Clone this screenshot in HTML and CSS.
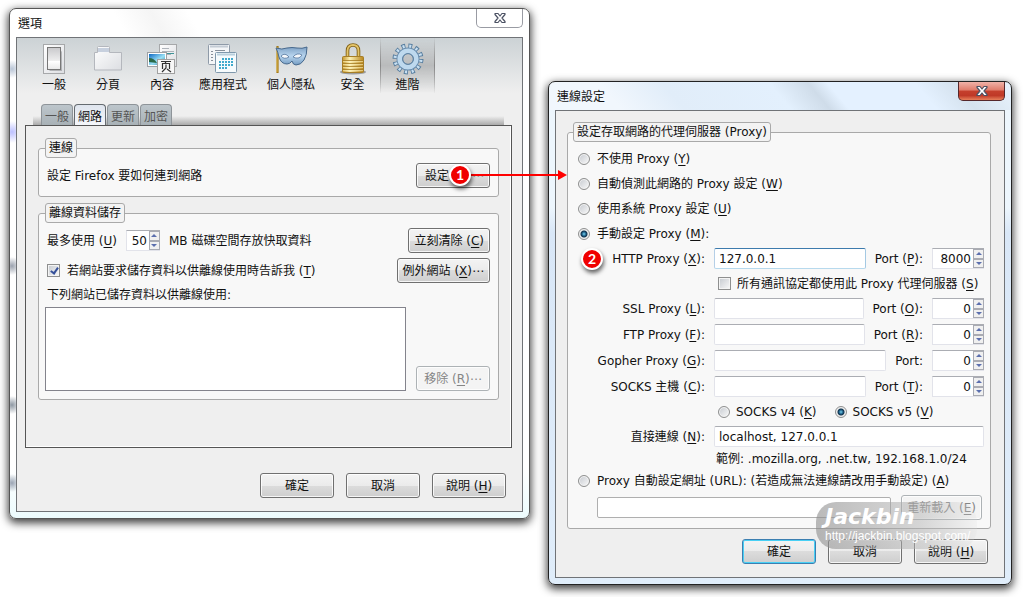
FILE: index.html
```html
<!DOCTYPE html>
<html lang="zh-Hant">
  <head>
    <meta charset="utf-8">
    <title>選項</title>
    <link rel="stylesheet" href="styles.css">
  </head>

  <body>
    <main class="desktop">
      <section class="window options">
        <header class="titlebar">
          <h1>選項</h1>
          <button class="close" aria-label="關閉">
            <svg width="14" height="12" viewBox="0 0 14 12">
              <path d="M2 1.500h3l2 2.500 2-2.500h3v1L9 6l3 3.500v1H9L7 8l-2 2.500H2v-1L5 6 2 2.500z" fill="#fff" stroke="#4b5163" stroke-width="1.200" stroke-linejoin="round"/>
            </svg>
          </button>
        </header>

        <div class="window-body">
          <nav class="toolbar">
            <button class="tool">
              <svg width="32" height="32" viewBox="0 0 32 32">
                <defs>
                  <linearGradient id="paper" x1="0" y1="0" x2="1" y2="1">
                    <stop offset="0" stop-color="#fff"/><stop offset="1" stop-color="#dcdee2"/>
                  </linearGradient>
                  <linearGradient id="switch" x1="0" y1="0" x2="0" y2="1">
                    <stop offset="0" stop-color="#c9c9cc"/><stop offset=".6" stop-color="#eee"/><stop offset=".62" stop-color="#fff"/><stop offset="1" stop-color="#e8e8e8"/>
                  </linearGradient>
                </defs>
                <rect x="5.500" y="1.500" width="21" height="29" fill="url(#paper)" stroke="#a6a8aa"/>
                <path d="M22 6l2 3v19H12l-2-2z" fill="#8f9194" opacity=".6"/>
                <rect x="9.500" y="4.500" width="13" height="22" fill="url(#switch)" stroke="#777"/>
              </svg>
              <span>一般</span>
            </button>
            <button class="tool">
              <svg width="32" height="32" viewBox="0 0 32 32">
                <path d="M2.500 9.500h3V4.500q0-1 1-1h10q1 0 1 1v5h12v17.500h-27z" fill="url(#paper)" stroke="#b4b7bd"/>
                <path d="M6 5h11v4H6z" fill="#c7d0de"/>
              </svg>
              <span>分頁</span>
            </button>
            <button class="tool">
              <svg width="32" height="32" viewBox="0 0 32 32">
                <defs>
                  <linearGradient id="sea" x1="0" y1="0" x2="1" y2="1">
                    <stop offset="0" stop-color="#0d69c5"/><stop offset=".55" stop-color="#9be0f5"/><stop offset="1" stop-color="#2378a0"/>
                  </linearGradient>
                </defs>
                <rect x="13.500" y="1.500" width="17" height="22" fill="url(#paper)" stroke="#a6a8aa"/>
                <path d="M16 5.500h7M16 8.500h12M16 11.500h9" stroke="#aeb3ba"/>
                <path d="M21 10.500h7" stroke="#3f9497"/>
                <rect x="1.500" y="9.500" width="19" height="14" fill="#fff" stroke="#9da0a4"/>
                <path d="M3 11h16v11H3z" fill="url(#sea)"/>
                <path d="M3 15q5 0 8 5l-8-1z" fill="#2b6a48"/>
                <rect x="11.500" y="16.500" width="17" height="14" fill="#f7f7f7" stroke="#a0a0a0"/>
                <path d="M15 18.500h10M20 18.500l-1 2M16.500 26v-5.500h7V26M20 21.500V25l-4 4M21 26l4 3" fill="none" stroke="#333" stroke-width="1.200"/>
              </svg>
              <span>內容</span>
            </button>
            <button class="tool">
              <svg width="32" height="32" viewBox="0 0 32 32">
                <rect x="1.500" y="1.500" width="21" height="20" rx="1" fill="#f4f6f8" stroke="#8e9aa8"/>
                <path d="M3 3.500h18" stroke="#c3cbd4" stroke-width="2"/>
                <path d="M4 8.500h2M4 11.500h2M4 14.500h2M4 17.500h2M8 7.500h10" stroke="#87909b"/>
                <rect x="8.500" y="9.500" width="21" height="20" rx="1" fill="#f6fbfd" stroke="#7f98ac"/>
                <path d="M10 11.500h18" stroke="#b9cfdc" stroke-width="2"/>
                <path d="M15 16h12M12 19h15M12 22h15M12 25h9" stroke="#40aacd" stroke-width="2" stroke-dasharray="2 1"/>
              </svg>
              <span>應用程式</span>
            </button>
            <button class="tool">
              <svg width="34" height="32" viewBox="0 0 34 32">
                <defs>
                  <linearGradient id="blue" x1="0" y1="0" x2="0" y2="1">
                    <stop offset="0" stop-color="#7ea1c5"/><stop offset=".5" stop-color="#b8d5ee"/><stop offset="1" stop-color="#739bc2"/>
                  </linearGradient>
                </defs>
                <path d="M3.500 3v27" stroke="#a57b16" stroke-width="2.200"/>
                <path d="M3 4v25" stroke="#ecc861" stroke-width=".8"/>
                <path d="M2 5q6 2 11 0 5-1 10 0 5 1 10-1 0 8-3 13-3 5-8 5-3 0-4-4-2 3-5 3-6 0-8-7-1-5-3-9z" fill="url(#blue)" stroke="#47698d"/>
                <path d="M7 13q4-4 8 1-5 3-8-1zM19 14q4-5 9-2-3 5-9 2z" fill="#f4f7fa" stroke="#5577a0" stroke-width=".8"/>
              </svg>
              <span>個人隱私</span>
            </button>
            <button class="tool">
              <svg width="32" height="32" viewBox="0 0 32 32">
                <defs>
                  <linearGradient id="gold" x1="0" y1="0" x2="1" y2="0">
                    <stop offset="0" stop-color="#c6982f"/><stop offset=".35" stop-color="#fdf1b4"/><stop offset="1" stop-color="#b9861c"/>
                  </linearGradient>
                </defs>
                <path d="M10.500 15V8q0-6 5.500-6t5.500 6v7" fill="none" stroke="#806117" stroke-width="3.600"/>
                <path d="M10.500 15V8q0-6 5.500-6t5.500 6v7" fill="none" stroke="#e3c368" stroke-width="1.800"/>
                <ellipse cx="16" cy="29" rx="13" ry="2.500" fill="#555" opacity=".5"/>
                <rect x="5.500" y="13.500" width="21" height="16" rx="1" fill="url(#gold)" stroke="#a67e27"/>
                <path d="M6 17.500h20M6 20.500h20M6 23.500h20M6 26.500h20" stroke="#a67b22" stroke-width=".8"/>
                <path d="M6 18.500h20M6 21.500h20M6 24.500h20M6 27.500h20" stroke="#fff3bd" stroke-width=".8" opacity=".7"/>
              </svg>
              <span>安全</span>
            </button>
            <button class="tool selected">
              <svg width="32" height="32" viewBox="0 0 32 32">
                <circle cx="16" cy="16" r="12.500" fill="none" stroke="#587e9f" stroke-width="6" stroke-dasharray="3.600 2.945"/>
                <circle cx="16" cy="16" r="12" fill="none" stroke="#c9e0f2" stroke-width="5" stroke-dasharray="1.900 4.383" stroke-dashoffset="-.8"/>
                <circle cx="16" cy="16" r="8.200" fill="none" stroke="#688cad" stroke-width="6.600"/>
                <circle cx="16" cy="16" r="8.200" fill="none" stroke="#bed9ee" stroke-width="4.800"/>
                <circle cx="16" cy="16" r="5.400" fill="none" stroke="#5f83a2"/>
              </svg>
              <span>進階</span>
            </button>
          </nav>

          <div class="tabs">
            <button class="tab">一般</button>
            <button class="tab active">網路</button>
            <button class="tab">更新</button>
            <button class="tab">加密</button>
          </div>

          <div class="panel">
            <fieldset class="group">
              <legend>連線</legend>
              <div class="row">
                <span>設定 Firefox 要如何連到網路</span>
                <button class="btn marked"><span>設定</span><span>⋯</span></button>
              </div>
            </fieldset>

            <fieldset class="group">
              <legend>離線資料儲存</legend>
              <div class="row">
                <div class="cache">
                  <label for="cacheSize">最多使用 (<u>U</u>)</label>
                  <span class="spin small">
                    <input id="cacheSize" type="text" value="50">
                    <span class="arrows"><button class="up" aria-label="增加"></button><button class="down" aria-label="減少"></button></span>
                  </span>
                  <span>MB 磁碟空間存放快取資料</span>
                </div>
                <button class="btn">立刻清除 (<u>C</u>)</button>
              </div>
              <div class="row">
                <label class="check"><input type="checkbox" checked> <span>若網站要求儲存資料以供離線使用時告訴我 (<u>T</u>)</span></label>
                <button class="btn">例外網站 (<u>X</u>)⋯</button>
              </div>
              <label class="list-label" for="siteList">下列網站已儲存資料以供離線使用:</label>
              <div class="list-row">
                <select id="siteList" class="list" size="5"></select>
                <button class="btn" disabled>移除 (<u>R</u>)⋯</button>
              </div>
            </fieldset>
          </div>

          <footer class="actions">
            <button class="btn">確定</button>
            <button class="btn">取消</button>
            <button class="btn">說明 (<u>H</u>)</button>
          </footer>
        </div>
      </section>

      <section class="window connection">
        <header class="titlebar">
          <h1>連線設定</h1>
          <button class="close" aria-label="關閉">
            <svg width="14" height="12" viewBox="0 0 14 12">
              <path d="M2 1.500h3l2 2.500 2-2.500h3v1L9 6l3 3.500v1H9L7 8l-2 2.500H2v-1L5 6 2 2.500z" fill="#fff" stroke="#4b5163" stroke-width="1.200" stroke-linejoin="round"/>
            </svg>
          </button>
        </header>

        <div class="window-body">
          <fieldset class="group proxy">
            <legend>設定存取網路的代理伺服器 (Proxy)</legend>
            <div class="modes">
              <label class="check"><input type="radio" name="mode"> <span>不使用 Proxy (<u>Y</u>)</span></label>
              <label class="check"><input type="radio" name="mode"> <span>自動偵測此網路的 Proxy 設定 (<u>W</u>)</span></label>
              <label class="check"><input type="radio" name="mode"> <span>使用系統 Proxy 設定 (<u>U</u>)</span></label>
              <label class="check"><input type="radio" name="mode" checked> <span>手動設定 Proxy (<u>M</u>):</span></label>
            </div>

            <div class="field">
              <label class="name" for="http">HTTP Proxy (<u>X</u>):</label>
              <input id="http" class="text focused" type="text" value="127.0.0.1">
              <label for="httpPort">Port (<u>P</u>):</label>
              <span class="spin">
                <input id="httpPort" type="text" value="8000">
                <span class="arrows"><button class="up" aria-label="增加"></button><button class="down" aria-label="減少"></button></span>
              </span>
            </div>
            <div class="sub">
              <label class="check"><input type="checkbox"> <span>所有通訊協定都使用此 Proxy 代理伺服器 (<u>S</u>)</span></label>
            </div>
            <div class="field">
              <label class="name" for="ssl">SSL Proxy (<u>L</u>):</label>
              <input id="ssl" class="text" type="text">
              <label for="sslPort">Port (<u>O</u>):</label>
              <span class="spin">
                <input id="sslPort" type="text" value="0">
                <span class="arrows"><button class="up" aria-label="增加"></button><button class="down" aria-label="減少"></button></span>
              </span>
            </div>
            <div class="field">
              <label class="name" for="ftp">FTP Proxy (<u>F</u>):</label>
              <input id="ftp" class="text" type="text">
              <label for="ftpPort">Port (<u>R</u>):</label>
              <span class="spin">
                <input id="ftpPort" type="text" value="0">
                <span class="arrows"><button class="up" aria-label="增加"></button><button class="down" aria-label="減少"></button></span>
              </span>
            </div>
            <div class="field">
              <label class="name" for="gopher">Gopher Proxy (<u>G</u>):</label>
              <input id="gopher" class="text" type="text">
              <label for="gopherPort">Port:</label>
              <span class="spin">
                <input id="gopherPort" type="text" value="0">
                <span class="arrows"><button class="up" aria-label="增加"></button><button class="down" aria-label="減少"></button></span>
              </span>
            </div>
            <div class="field">
              <label class="name" for="socks">SOCKS 主機 (<u>C</u>):</label>
              <input id="socks" class="text" type="text">
              <label for="socksPort">Port (<u>T</u>):</label>
              <span class="spin">
                <input id="socksPort" type="text" value="0">
                <span class="arrows"><button class="up" aria-label="增加"></button><button class="down" aria-label="減少"></button></span>
              </span>
            </div>
            <div class="sub">
              <label class="check"><input type="radio" name="socksVersion"> <span>SOCKS v4 (<u>K</u>)</span></label>
              <label class="check"><input type="radio" name="socksVersion" checked> <span>SOCKS v5 (<u>V</u>)</span></label>
            </div>
            <div class="field">
              <label class="name" for="direct">直接連線 (<u>N</u>):</label>
              <input id="direct" class="text" type="text" value="localhost, 127.0.0.1">
            </div>
            <p class="example">範例: .mozilla.org, .net.tw, 192.168.1.0/24</p>
            <label class="check auto"><input type="radio" name="mode"> <span>Proxy 自動設定網址 (URL): (若造成無法連線請改用手動設定) (<u>A</u>)</span></label>
            <div class="reload">
              <input class="text" type="text" aria-label="Proxy 自動設定網址" disabled>
              <button class="btn" disabled>重新載入 (<u>E</u>)</button>
            </div>
          </fieldset>

          <footer class="actions">
            <button class="btn default">確定</button>
            <button class="btn">取消</button>
            <button class="btn">說明 (<u>H</u>)</button>
          </footer>
        </div>
      </section>

      <!-- callouts -->
      <svg class="arrow" width="100" height="10" viewBox="0 0 100 10">
        <path d="M0 5h92" stroke="#f00" stroke-width="2"/>
        <path d="M90 0l9 5-9 5z" fill="#f00"/>
      </svg>
      <span class="badge one">1</span>
      <span class="badge two">2</span>

      <div class="watermark">
        <strong>Jackbin</strong>
        <span>http://jackbin.blogspot.com/</span>
      </div>
    </main>
  </body>
</html>
```

FILE: styles.css
```css
:root {
  --face: #efefef;
  --line: #a9a9a9;
  --ui: "DejaVu Sans", "Noto Sans CJK TC", sans-serif;
}

* {
  box-sizing: border-box;
}

body {
  margin: 0;
  background: #fff;
  color: #111;
  font: 12px/14px var(--ui);
}

button,
input,
select {
  margin: 0;
  font: inherit;
  color: inherit;
}

u {
  text-underline-offset: 2px;
}

.desktop {
  position: relative;
  min-height: 100vh;
  overflow: hidden;
}

/* windows */
.window {
  position: absolute;
  padding: 0 6px 6px;
  border: 1px solid #555;
  border-radius: 7px;
  background: #fff;
  box-shadow: 0 3px 9px 1px rgba(0, 0, 0, 0.75);
}
.options {
  left: 9px;
  top: 8px;
  width: 521px;
  background:
    radial-gradient(circle at 2px 60px, #b9c5d6, transparent 9px),
    radial-gradient(circle at 2px 123px, #bcc0ff, transparent 11px),
    radial-gradient(circle at 2px 257px, #9ba2ae, transparent 9px),
    radial-gradient(circle at 2px 396px, #8e98a3, transparent 9px),
    radial-gradient(circle at 2px 474px, #9ba5b4, transparent 9px),
    linear-gradient(60deg, #fff 22%, #f5f5f5 29%, #fff 36%) 0 0 / 100% 28px no-repeat,
    linear-gradient(#fff 90%, #ecfbfd);
}
.connection {
  left: 548px;
  top: 81px;
  width: 464px;
  border-color: #222;
  background:
    linear-gradient(50deg, #f1f7fd 15%, #e1edf9 28%, #e3f0fd 50%, #cfdce9 58%, #e4f1ff 62%, #e4f1ff 80%, #d5e2ee 88%, #e9f3fd) 0 0 / 100% 28px no-repeat,
    linear-gradient(#edf6fd 25%, #d9e7f7 30%, #e0edfa);
}

.titlebar {
  display: flex;
  justify-content: space-between;
  height: 28px;
}
.titlebar h1 {
  margin: 7px 2px;
  font: 12px/16px var(--ui);
}
.close {
  display: flex;
  justify-content: center;
  align-items: center;
  width: 47px;
  height: 19px;
  padding: 0;
  border: 1px solid #999ba3;
  border-top: 0;
  border-radius: 0 0 5px 5px;
  background: #fff;
}
.connection .close {
  border-color: #55272a;
  background: linear-gradient(#efb2a8, #df7c6b 45%, #c5402d 50%, #bf3927 75%, #e7805b);
}

.window-body {
  border: 1px solid #707377;
  background: var(--face);
}

/* toolbar */
.toolbar {
  display: flex;
  height: 55px;
  padding-left: 10px;
  background: linear-gradient(#ccd2d5, var(--face));
}
.tool {
  display: flex;
  flex-direction: column;
  align-items: center;
  gap: 3px;
  min-width: 54px;
  padding: 5px 10px 0;
  border: 0;
  background: none;
}
.tool:nth-child(n + 5) {
  min-width: 55px;
}
.tool.selected {
  border-right: 1px solid;
  border-left: 1px solid;
  border-image: linear-gradient(transparent, #888 50%, transparent) 1;
  background: linear-gradient(rgba(150, 150, 150, 0), rgba(150, 150, 150, 0.5) 50%, rgba(150, 150, 150, 0));
}

/* tabs */
.tabs {
  display: flex;
  gap: 1px;
  margin: 11px 10px 0 8px;
  padding-left: 16px;
  background: linear-gradient(transparent 12px, #aaa) 8px 0 / calc(100% - 16px) 100% no-repeat;
}
.tab {
  width: 32px;
  height: 21px;
  padding: 4px 0 0;
  border: 1px solid #8e9499;
  border-bottom: 0;
  border-radius: 4px 4px 0 0;
  background: linear-gradient(#bdc6cc, #a8b1b6);
  color: #555;
}
.tab.active {
  border-color: #656b70;
  background: linear-gradient(#dfe5ee, #f5f7fb);
  color: #111;
}

.panel {
  height: 323px;
  margin: 0 10px 0 8px;
  padding: 12px;
  border: 1px solid #555;
  box-shadow: inset -1px -1px #fff;
}

/* groups */
.group {
  min-width: 0;
  margin: 0 0 6px;
  padding: 5px 8px 8px 6px;
  border: 1px solid var(--line);
  border-radius: 3px;
  background: #f8f8f8;
}
.group legend {
  height: 20px;
  padding: 2px 3px;
  border: 1px solid var(--line);
  border-radius: 3px;
  background: #f3f3f3;
}

.row,
.list-row {
  display: flex;
  justify-content: space-between;
  align-items: center;
}
.row {
  padding-left: 2px;
}
.row + .row {
  margin-top: 5px;
}
.cache {
  display: flex;
  align-items: center;
  gap: 9px;
}
.list-label {
  display: block;
  margin: 5px 2px;
}
.list-row {
  align-items: flex-end;
  gap: 10px;
}
.list {
  flex: 1;
  height: 84px;
  border: 1px solid #83838c;
  border-radius: 0;
  background: #fff;
}

/* controls */
.btn {
  min-width: 74px;
  height: 25px;
  padding: 0 5px;
  border: 1px solid #707070;
  border-radius: 3px;
  background: linear-gradient(#f3f3f3, #ebebeb 50%, #dcdcdc 50%, #cecece);
  box-shadow: inset 0 0 0 1px rgba(255, 255, 255, 0.8);
  white-space: nowrap;
}
.btn:disabled {
  border-color: #adb2b5;
  background: #f4f4f4;
  color: #858585;
}
.btn.default {
  border-color: #3c7fb1;
  box-shadow: inset 0 0 0 1px #48d0f5;
}
.btn.marked {
  display: flex;
  justify-content: space-between;
  align-items: center;
  padding: 0 5px 0 8px;
}
.marked span + span {
  color: #999;
}

.check {
  display: flex;
  align-items: center;
  gap: 7px;
}
.check input {
  appearance: none;
  flex: none;
  width: 12px;
  height: 12px;
  border: 1px solid #8e8f8f;
  background: linear-gradient(135deg, #c5c9cf, #fafafa);
  box-shadow: inset 0 0 0 1px #f4f4f4;
}
.check input[type="checkbox"] {
  position: relative;
  width: 13px;
  height: 13px;
}
.check input[type="checkbox"]:checked::after {
  content: "";
  position: absolute;
  left: 4px;
  top: 1px;
  width: 3px;
  height: 6px;
  border: solid #35509a;
  border-width: 0 2px 2px 0;
  transform: rotate(35deg);
}
.check input[type="radio"] {
  border-radius: 50%;
}
.check input[type="radio"]:checked {
  background: radial-gradient(circle at 5px 5px, #79d5f2, #1c5c85 2px, #12334c 3px, #eee 4px);
  box-shadow: none;
}

.text,
.spin {
  height: 21px;
  border: 1px solid #e2e3ea;
  border-top-color: #abadb3;
  background: #fff;
}
.text {
  flex: 1;
  min-width: 0;
  padding: 0 4px;
  border-radius: 2px;
}
.text.focused {
  border-color: #3d7bad #a4c9e3 #b7d9ed #b5cfe7;
}
.text:disabled {
  border-color: #afafaf;
}

.spin {
  display: flex;
  width: 52px;
  border-right: 0;
}
.spin.small {
  width: 34px;
}
.spin input {
  flex: 1;
  width: 0;
  padding: 0 2px 0 0;
  border: 0;
  background: none;
  text-align: right;
}
.arrows {
  display: flex;
  flex-direction: column;
  width: 11px;
}
.arrows button {
  display: flex;
  flex: 1;
  justify-content: center;
  align-items: center;
  padding: 0;
  border: 1px solid #a9abb3;
  background: #f0f0f0;
}
.arrows button::after {
  content: "";
  border: solid transparent;
  border-width: 0 3px;
}
.arrows .up::after {
  border-bottom: 3px solid #5b6fae;
}
.arrows .down::after {
  border-top: 3px solid #5b6fae;
}

.actions {
  display: flex;
  justify-content: flex-end;
  gap: 12px;
  padding: 25px 16px 13px;
}

/* connection settings */
.proxy {
  display: flex;
  flex-direction: column;
  gap: 5px;
  margin: 11px 13px 0 11px;
  padding: 4px 6px 8px 10px;
}
.proxy legend {
  margin-left: -5px;
}
.modes {
  margin-bottom: -3px;
}
.modes .check {
  height: 25px;
}
.field {
  display: flex;
  align-items: center;
  gap: 9px;
}
.field .name {
  width: 127px;
  text-align: right;
}
.sub {
  display: flex;
  gap: 18px;
  height: 19px;
  padding-left: 140px;
}
.sub .check {
  gap: 6px;
}
.example {
  margin: 0;
  padding-left: 138px;
}
.auto {
  height: 19px;
}
.reload {
  display: flex;
  align-items: center;
  gap: 10px;
  padding: 0 2px 0 19px;
}
.connection .actions {
  padding: 10px 16px 13px;
}

/* callouts */
.arrow {
  position: absolute;
  left: 468px;
  top: 170px;
}
.badge {
  position: absolute;
  width: 22px;
  height: 22px;
  border: 2px solid #fff;
  border-radius: 50%;
  background: #f00000;
  box-shadow: 1px 3px 4px rgba(0, 0, 0, 0.6);
  color: #fff;
  font: bold 14px/18px Lato, sans-serif;
  text-align: center;
}
.badge.one {
  left: 449px;
  top: 164px;
}
.badge.two {
  left: 581px;
  top: 248px;
}

.watermark {
  position: absolute;
  left: 816px;
  top: 502px;
  display: flex;
  flex-direction: column;
  width: 161px;
  height: 47px;
  padding: 4px 9px;
  border-radius: 20px;
  background: linear-gradient(90deg, rgba(140, 140, 140, 0.6), rgba(180, 180, 180, 0.5) 65%, rgba(220, 220, 220, 0.2));
  color: #fff;
}
.watermark strong {
  font: italic bold 22px/22px "DejaVu Sans", sans-serif;
}
.watermark span {
  font: 12px/16px "Liberation Sans", sans-serif;
}
```
